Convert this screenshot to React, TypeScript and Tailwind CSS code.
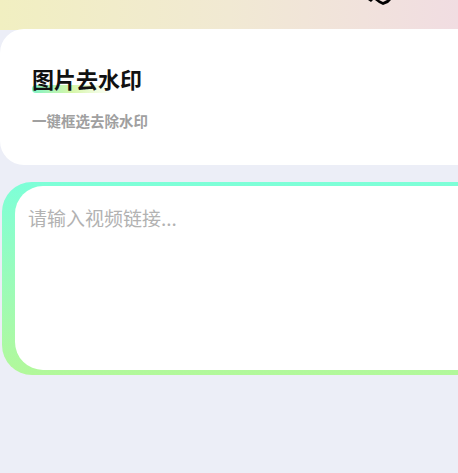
import React from "react";

export default function App() {
  return (
    <div
      className="relative w-[458px] h-[473px] overflow-hidden bg-[#eceef7]"
      style={{ fontFamily: '"Noto Sans CJK SC", "Noto Sans", sans-serif' }}
    >
      <div className="h-[30px] bg-gradient-to-r from-[#f1efc1] via-[#f1e9d3] to-[#f1dde2]" />
      <svg
        className="absolute left-[366px] top-0"
        width="28"
        height="8"
        viewBox="0 0 28 8"
      >
        <path d="M2 0 L5 2 L7 0 Z" fill="#000" />
        <path d="M9 0 L13 3 L17 5 L22 3 L25 0 L21 0 L17 2 L13 0 Z" fill="#000" />
      </svg>
      <div className="w-[520px] bg-white rounded-l-[24px] h-[136px] -mt-px pl-[32px] pt-[34px] flex flex-col">
        <div className="relative w-fit">
          <div className="absolute left-0 top-[22px] w-[80px] h-[8px] rounded-full bg-gradient-to-r from-[#7ef2c4] via-[#d6f6a8] to-[#ffffff00]" />
          <div className="relative text-[22px] font-bold text-[#111] leading-[30px]">图片去水印</div>
        </div>
        <div className="mt-[18px] text-[14.5px] font-semibold text-[#a0a0a0] leading-[20px]">一键框选去除水印</div>
      </div>
      <div className="mt-[17px] ml-[2px] w-[520px] rounded-l-[30px] bg-gradient-to-b from-[#7dffd8] to-[#b2f89a] pl-[13px] pt-[4px] pb-[5px]">
        <div className="h-[184px] bg-white rounded-l-[28px] pl-[13px] pt-[19px]">
          <div className="text-[19px] text-[#b2b2b2] leading-[26px]">请输入视频链接...</div>
        </div>
      </div>
    </div>
  );
}
